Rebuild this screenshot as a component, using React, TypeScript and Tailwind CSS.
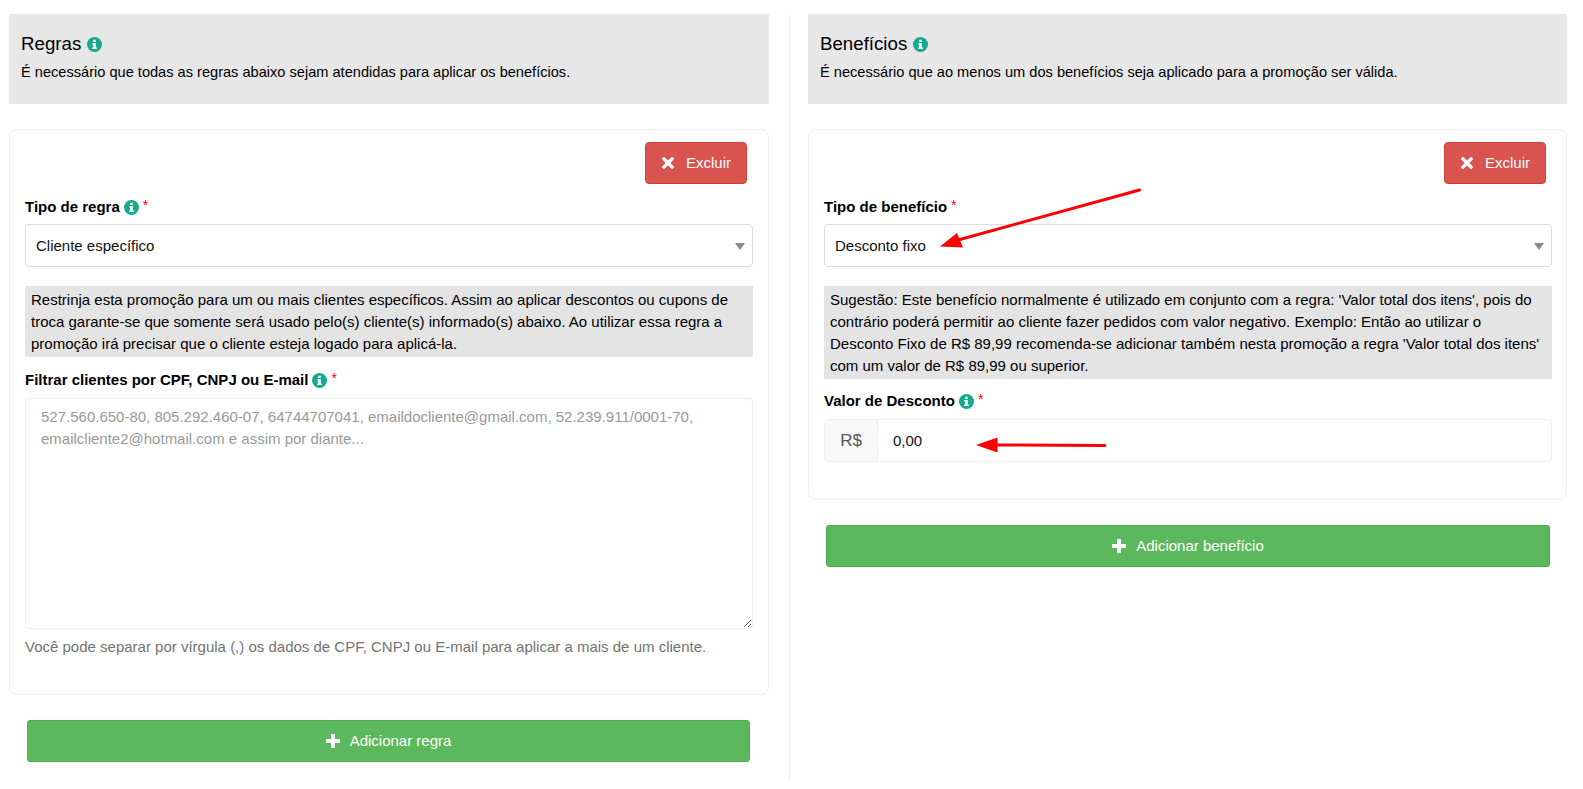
import React from "react";

function Info() {
  return (
    <svg width="15" height="15" viewBox="0 0 15 15" className="shrink-0">
      <circle cx="7.5" cy="7.5" r="7.5" fill="#17a98d" />
      <path d="M6.2 2.8h2.6v2.1H6.2z M5.4 6h3.4v4.4h1v1.7H5.2v-1.7h1V7.7h-.8z" fill="#ffffff" />
    </svg>
  );
}

function Star() {
  return <span className="relative -top-[2px] text-[14px] font-normal text-[#ff0000]">*</span>;
}

function TimesIcon() {
  return (
    <svg width="14" height="14" viewBox="0 0 14 14" className="shrink-0">
      <path
        d="M3.6 1.2 7 4.6l3.4-3.4a1 1 0 0 1 1.4 0l1 1a1 1 0 0 1 0 1.4L9.4 7l3.4 3.4a1 1 0 0 1 0 1.4l-1 1a1 1 0 0 1-1.4 0L7 9.4l-3.4 3.4a1 1 0 0 1-1.4 0l-1-1a1 1 0 0 1 0-1.4L4.6 7 1.2 3.6a1 1 0 0 1 0-1.4l1-1a1 1 0 0 1 1.4 0z"
        fill="#ffffff"
      />
    </svg>
  );
}

function PlusIcon() {
  return (
    <svg width="14" height="14" viewBox="0 0 14 14" className="shrink-0">
      <path d="M5 0h4v5h5v4H9v5H5V9H0V5h5z" fill="#ffffff" />
    </svg>
  );
}

function DeleteButton() {
  return (
    <div className="mr-[6px] flex justify-end">
      <button className="flex h-[42px] w-[102px] items-center justify-center gap-[11px] rounded-[4px] border border-[#d43f3a] bg-[#d9534f] text-[15px] text-white">
        <TimesIcon />
        <span className="pt-px">Excluir</span>
      </button>
    </div>
  );
}

function Select({ value }: { value: string }) {
  return (
    <div className="flex h-[43px] items-center justify-between rounded-[4px] border border-[#dcdcdc] bg-white pl-[10px] pr-[7px] text-[15px] text-[#111]">
      <span className="pt-px">{value}</span>
      <svg width="10" height="7" viewBox="0 0 10 7" className="mt-[1px]">
        <path d="M0 0h10L5 7z" fill="#888888" />
      </svg>
    </div>
  );
}

function AddButton({ label, pad }: { label: string; pad: string }) {
  return (
    <div className={`mt-[25px] ${pad}`}>
      <button className="flex h-[42px] w-full items-center justify-center gap-[10px] rounded-[3px] border border-[#4cae4c] bg-[#5cb85c] text-[15px] text-white">
        <PlusIcon />
        <span>{label}</span>
      </button>
    </div>
  );
}

function Header({ title, text }: { title: string; text: string }) {
  return (
    <div className="h-[90px] bg-[#e7e7e7] px-[12px] pt-[20px] text-black">
      <div className="flex h-[20px] items-center gap-[6px] text-[18.7px]">
        <span>{title}</span>
        <Info />
      </div>
      <p className="mt-[8px] text-[14.6px] leading-[20px]">{text}</p>
    </div>
  );
}

function Label({ text, info = true }: { text: string; info?: boolean }) {
  return (
    <div className="flex h-[20px] items-center gap-[4px] text-[15px] font-bold text-black">
      <span>{text}</span>
      {info && <Info />}
      <Star />
    </div>
  );
}

function Note({ children }: { children: React.ReactNode }) {
  return (
    <p className="mt-[19px] bg-[#e4e4e4] pl-[6px] pr-[4px] pt-[3px] pb-[2px] text-[15px] leading-[22px] text-black">
      {children}
    </p>
  );
}

export default function App() {
  return (
    <div
      className="relative flex h-[789px] w-[1583px] overflow-hidden bg-white pt-[14px] pl-[9px] text-[15px]"
      style={{ fontFamily: '"Liberation Sans", Arial, sans-serif' }}
    >
      <section className="w-[760px]">
        <Header title="Regras" text="É necessário que todas as regras abaixo sejam atendidas para aplicar os benefícios." />
        <div className="mt-[25px] rounded-[8px] border border-[#eeeeee] pl-[15px] pr-[15px] pt-[12px] pb-[37px]">
          <DeleteButton />
          <div className="mt-[13px]">
            <Label text="Tipo de regra" />
          </div>
          <div className="mt-[7px]">
            <Select value="Cliente específico" />
          </div>
          <Note>
            Restrinja esta promoção para um ou mais clientes específicos. Assim ao aplicar descontos ou cupons de troca
            garante-se que somente será usado pelo(s) cliente(s) informado(s) abaixo. Ao utilizar essa regra a promoção
            irá precisar que o cliente esteja logado para aplicá-la.
          </Note>
          <div className="mt-[13px]">
            <Label text="Filtrar clientes por CPF, CNPJ ou E-mail" />
          </div>
          <textarea
            className="mt-[8px] block h-[231px] w-full rounded-[4px] border border-[#eeeeee] px-[15px] py-[7px] text-[15px] leading-[22px] outline-none placeholder:text-[#999999]"
            placeholder="527.560.650-80, 805.292.460-07, 64744707041, emaildocliente@gmail.com, 52.239.911/0001-70, emailcliente2@hotmail.com e assim por diante..."
          />
          <p className="mt-[8px] text-[15px] leading-[20px] text-[#737373]">
            Você pode separar por vírgula (,) os dados de CPF, CNPJ ou E-mail para aplicar a mais de um cliente.
          </p>
        </div>
        <AddButton label="Adicionar regra" pad="pl-[18px] pr-[19px]" />
      </section>

      <div className="ml-[20px] h-[766px] w-px bg-[#eeeeee]" />

      <section className="ml-[18px] w-[759px]">
        <Header title="Benefícios" text="É necessário que ao menos um dos benefícios seja aplicado para a promoção ser válida." />
        <div className="mt-[25px] rounded-[8px] border border-[#eeeeee] pl-[15px] pr-[14px] pt-[12px] pb-[37px]">
          <DeleteButton />
          <div className="mt-[13px]">
            <Label text="Tipo de benefício" info={false} />
          </div>
          <div className="mt-[7px]">
            <Select value="Desconto fixo" />
          </div>
          <Note>
            Sugestão: Este benefício normalmente é utilizado em conjunto com a regra: 'Valor total dos itens', pois do
            contrário poderá permitir ao cliente fazer pedidos com valor negativo. Exemplo: Então ao utilizar o Desconto
            Fixo de R$ 89,99 recomenda-se adicionar também nesta promoção a regra 'Valor total dos itens' com um valor de
            R$ 89,99 ou superior.
          </Note>
          <div className="mt-[12px]">
            <Label text="Valor de Desconto" />
          </div>
          <div className="mt-[8px] flex h-[43px] overflow-hidden rounded-[4px] border border-[#eeeeee]">
            <div className="flex w-[53px] items-center justify-center border-r border-[#eeeeee] bg-[#f8f8f8] text-[17px] text-[#555555]">
              R$
            </div>
            <div className="flex flex-1 items-center pl-[15px] pt-px text-[15px] text-[#111]">0,00</div>
          </div>
        </div>
        <AddButton label="Adicionar benefício" pad="pl-[18px] pr-[17px]" />
      </section>

      <svg className="pointer-events-none absolute left-0 top-0" width="1583" height="789" viewBox="0 0 1583 789">
        <path d="M1139.5 190 L958 240" stroke="#ff0000" strokeWidth="3" strokeLinecap="round" fill="none" />
        <path d="M940 246.5 L957 233 L963 247.5 Z" fill="#ff0000" />
        <path d="M1105 445.5 L995 445" stroke="#ff0000" strokeWidth="3" strokeLinecap="round" fill="none" />
        <path d="M976 445 L997.5 437.5 L997.5 452.5 Z" fill="#ff0000" />
      </svg>
    </div>
  );
}
